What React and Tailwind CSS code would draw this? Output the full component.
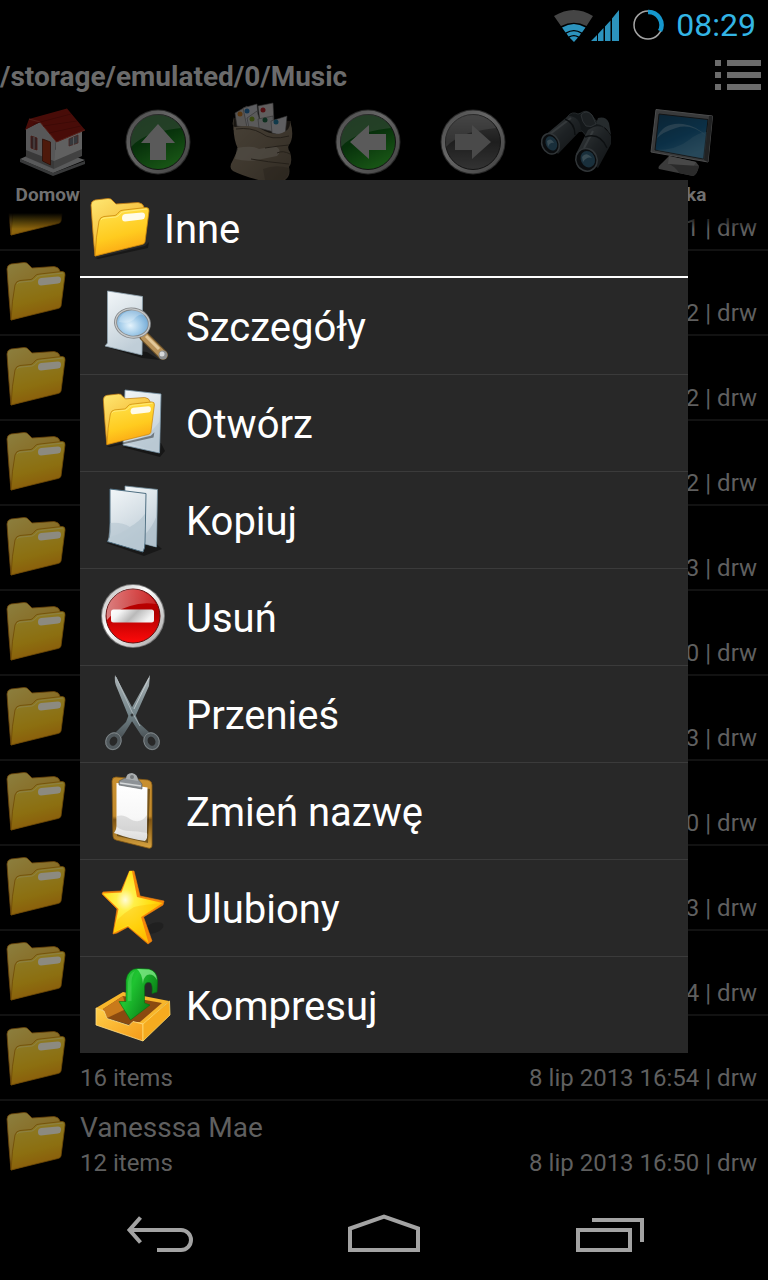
import React from 'react';

const FolderShape = () => (
  <g>
    <path d="M7 62 L57 50 L61 46 L60 52 L10 63Z" fill="#000" opacity="0.4" />
    <path
      d="M3 9 Q3 5 7 4 L20 2.500 Q23 2 25 5 L28 8 L50 6.500 Q55 7 56 11 L56 46 L7 60 Q5 40 3 9Z"
      fill="url(#folderBack)"
      stroke="#c07a10"
      strokeWidth="0.8"
    />
    <path
      d="M7 60 Q8 40 11 25 Q12 21 16 20.500 L27 19.500 Q29 19 31 16 Q32.500 14 36 14 L58 11.500 Q61.500 11.500 61 15 L57 46 Q56.500 48 54 48.500Z"
      fill="url(#folderFront)"
      stroke="#c9860d"
      strokeWidth="0.8"
    />
    <path d="M13 24 Q14 22 17 22 L28 21 Q31 20 33 17 Q34 16 37 15.500 L59 13" fill="none" stroke="#fff09a" strokeWidth="1" opacity="0.7" />
    <path d="M37 18 L54 16.500 Q57 16.500 57 19.500 Q57 23 54 23.500 L37 25.500 Q34 25.500 34 22 Q34 18.500 37 18Z" fill="#fffbe9" />
  </g>
);

const Folder = ({ className }) => (
  <svg viewBox="0 0 64 64" className={className}>
    <FolderShape />
  </svg>
);

// Gradients shared by all the icons
const Gradients = () => (
  <svg className="absolute w-0 h-0" aria-hidden="true">
    <defs>
      <linearGradient id="folderBack" x1="0" y1="0" x2="0.6" y2="1">
        <stop offset="0" stopColor="#ffe873" />
        <stop offset="1" stopColor="#f0a81c" />
      </linearGradient>
      <linearGradient id="folderFront" x1="0.2" y1="0" x2="0.5" y2="1">
        <stop offset="0" stopColor="#ffe24d" />
        <stop offset="0.6" stopColor="#ffcb1f" />
        <stop offset="1" stopColor="#fba312" />
      </linearGradient>
      <linearGradient id="paper" x1="0" y1="0" x2="0.4" y2="1">
        <stop offset="0" stopColor="#f3f7f9" />
        <stop offset="0.55" stopColor="#d8e1e7" />
        <stop offset="1" stopColor="#c0ced8" />
      </linearGradient>
      <linearGradient id="whitePaper" x1="0" y1="0" x2="0" y2="1">
        <stop offset="0" stopColor="#ffffff" />
        <stop offset="0.6" stopColor="#f7f7f7" />
        <stop offset="1" stopColor="#dcdcdc" />
      </linearGradient>
      <linearGradient id="ring" x1="0" y1="0" x2="1" y2="1">
        <stop offset="0" stopColor="#b5b5b5" />
        <stop offset="0.4" stopColor="#ffffff" />
        <stop offset="1" stopColor="#a0a0a0" />
      </linearGradient>
      <linearGradient id="red" x1="0" y1="0" x2="0" y2="1">
        <stop offset="0" stopColor="#c80000" />
        <stop offset="0.45" stopColor="#b00000" />
        <stop offset="1" stopColor="#ff0a0a" />
      </linearGradient>
      <linearGradient id="green" x1="0" y1="0" x2="0.5" y2="1">
        <stop offset="0" stopColor="#0c6a1c" />
        <stop offset="0.5" stopColor="#12791c" />
        <stop offset="1" stopColor="#3bd035" />
      </linearGradient>
      <linearGradient id="grey" x1="0" y1="0" x2="0" y2="1">
        <stop offset="0" stopColor="#8a8a8a" />
        <stop offset="0.5" stopColor="#4c4c4c" />
        <stop offset="1" stopColor="#808080" />
      </linearGradient>
      <linearGradient id="gloss" x1="0" y1="0" x2="1" y2="0">
        <stop offset="0" stopColor="#fff" stopOpacity="0.5" />
        <stop offset="1" stopColor="#fff" stopOpacity="0.15" />
      </linearGradient>
      <linearGradient id="bar" x1="0" y1="0" x2="1" y2="0.3">
        <stop offset="0" stopColor="#ffffff" />
        <stop offset="0.25" stopColor="#f4f4f4" />
        <stop offset="0.6" stopColor="#b9b9b9" />
        <stop offset="1" stopColor="#f4f4f4" />
      </linearGradient>
      <radialGradient id="lens" cx="0.45" cy="0.6" r="0.6">
        <stop offset="0" stopColor="#e4f3fc" />
        <stop offset="0.5" stopColor="#a5cdea" />
        <stop offset="1" stopColor="#6ba4d2" />
      </radialGradient>
      <linearGradient id="steel" x1="0" y1="0" x2="0" y2="1">
        <stop offset="0" stopColor="#aab2b5" />
        <stop offset="0.6" stopColor="#75868b" />
        <stop offset="1" stopColor="#4b5357" />
      </linearGradient>
      <linearGradient id="wood" x1="0" y1="0" x2="0" y2="1">
        <stop offset="0" stopColor="#c99030" />
        <stop offset="0.55" stopColor="#c28a2c" />
        <stop offset="0.6" stopColor="#7d5312" />
        <stop offset="1" stopColor="#d9a440" />
      </linearGradient>
      <radialGradient id="star" cx="0.38" cy="0.4" r="0.6">
        <stop offset="0" stopColor="#fffbd8" />
        <stop offset="0.25" stopColor="#fff04a" />
        <stop offset="0.7" stopColor="#ffdf12" />
        <stop offset="1" stopColor="#ffc505" />
      </radialGradient>
      <linearGradient id="tray" x1="0" y1="0" x2="1" y2="1">
        <stop offset="0" stopColor="#ffd04a" />
        <stop offset="1" stopColor="#f59a18" />
      </linearGradient>
      <linearGradient id="arrow" x1="0" y1="0" x2="1" y2="0.6">
        <stop offset="0" stopColor="#14a526" />
        <stop offset="0.4" stopColor="#1fc431" />
        <stop offset="1" stopColor="#087a14" />
      </linearGradient>
      <linearGradient id="screen" x1="0" y1="0" x2="0.5" y2="1">
        <stop offset="0" stopColor="#1c5a82" />
        <stop offset="0.6" stopColor="#1d78b0" />
        <stop offset="1" stopColor="#4fa8d8" />
      </linearGradient>
      <linearGradient id="barrel" x1="0" y1="0" x2="1" y2="1">
        <stop offset="0" stopColor="#8b959a" />
        <stop offset="0.5" stopColor="#4b555b" />
        <stop offset="1" stopColor="#2a3034" />
      </linearGradient>
      <linearGradient id="sack" x1="0" y1="0" x2="1" y2="1">
        <stop offset="0" stopColor="#b5a48a" />
        <stop offset="0.5" stopColor="#9b8a72" />
        <stop offset="1" stopColor="#7a6c58" />
      </linearGradient>
    </defs>
  </svg>
);

const Icon = ({ children }) => (
  <svg viewBox="0 0 80 80" className="w-20 h-20 shrink-0">
    {children}
  </svg>
);

const Details = () => (
  <Icon>
    <path d="M14 61 L50 72 L68 74 L55 66Z" fill="#000" opacity="0.45" />
    <path d="M15.500 5 L50.500 10.500 L50 69 L13 60 L15.500 57Z" fill="url(#paper)" stroke="#8fa3b0" strokeWidth="0.8" />
    <path d="M52 50 L71 69" stroke="#6e5228" strokeWidth="10" strokeLinecap="round" />
    <path d="M53 51 L71 69" stroke="#b8925a" strokeWidth="8" strokeLinecap="round" />
    <path d="M54 50 L67 63" stroke="#e3c899" strokeWidth="3" />
    <circle cx="71" cy="69" r="4.500" fill="#8d8f90" />
    <circle cx="70" cy="68" r="2.500" fill="#d6d8d9" />
    <ellipse cx="40.500" cy="37" rx="17" ry="14" fill="url(#lens)" stroke="#85888a" strokeWidth="3" transform="rotate(10 40 37)" />
    <ellipse cx="40.500" cy="37" rx="17" ry="14" fill="none" stroke="#c8cbcc" strokeWidth="1.200" transform="rotate(10 40 37)" />
    <path d="M27 36 Q38 39 44 31 Q50 26 53 31 Q51 24 40 24 Q28 26 27 36Z" fill="#fff" opacity="0.25" />
  </Icon>
);

const Open = () => (
  <Icon>
    <path d="M30 64 L68 74 L73 68 L69 60Z" fill="#000" opacity="0.45" />
    <path d="M33 7 L69 11 L67.500 70 L31 62Z" fill="url(#paper)" stroke="#7895a8" strokeWidth="0.8" />
    <path d="M68 38 Q56 55 36 60 L67 69Z" fill="#b4c4d0" opacity="0.6" />
    <g transform="translate(8.700 8.800) scale(0.880)">
      <FolderShape />
    </g>
  </Icon>
);

const Copy = () => (
  <Icon>
    <path d="M14 63 L52 76 L70 69 L60 60Z" fill="#000" opacity="0.4" />
    <path d="M33 6 L65.500 9.500 L64.500 67 L53 64 L33 60Z" fill="url(#paper)" stroke="#6f8a99" strokeWidth="0.8" />
    <path d="M65 35 Q60 48 53 54 L53 64 L64 67Z" fill="#acbdc9" opacity="0.7" />
    <path d="M18 9 L54 13.500 L53 62 Q53 68 51 72 L15.500 61.500 Q18 58 18 52Z" fill="url(#paper)" stroke="#4f6f82" strokeWidth="1" />
    <path d="M18 43 Q30 42 38 47 Q47 42 53 34 L51 71 L16 61Z" fill="#aebfcb" opacity="0.5" />
    <path d="M38 47 Q30 54 18 57 L16 61 L51 71 L53 34 Q47 42 38 47Z" fill="#b7c7d2" opacity="0.4" />
  </Icon>
);

const Remove = () => (
  <Icon>
    <circle cx="41" cy="39" r="32" fill="#777" />
    <circle cx="41" cy="39" r="31" fill="url(#ring)" />
    <circle cx="41" cy="39" r="27" fill="url(#red)" stroke="#5e1010" strokeWidth="1" />
    <path d="M15 43 A26 26 0 0 1 64 27 Q50 25 38 29 Q22 34 15 43Z" fill="url(#gloss)" />
    <rect x="19" y="32.500" width="43" height="13" rx="2.500" fill="url(#bar)" />
  </Icon>
);

const Cut = () => (
  <Icon>
    <ellipse cx="21.500" cy="67" rx="6" ry="7" fill="none" stroke="#50585c" strokeWidth="4.500" transform="rotate(25 21 67)" />
    <ellipse cx="59.500" cy="67" rx="6" ry="7" fill="none" stroke="#50585c" strokeWidth="4.500" transform="rotate(-25 60 67)" />
    <path d="M58 1 L57 12 L44 41 L32 60 L29 64 L22 60 L34 48 L39 35Z" fill="url(#steel)" />
    <path d="M23 1 Q22 8 25 14 L36 41 L49 61 L52 64 L59 60 L47 49 L41 35Z" fill="url(#steel)" />
    <path d="M24 3 L40 38 L48 52" stroke="#b5bec1" strokeWidth="0.8" fill="none" />
    <path d="M57 4 L42 35" stroke="#cdd3d5" strokeWidth="0.8" fill="none" />
    <ellipse cx="21.500" cy="67" rx="7.500" ry="8.500" fill="none" stroke="#83898b" strokeWidth="0.8" transform="rotate(25 21 67)" />
    <ellipse cx="59.500" cy="67" rx="7.500" ry="8.500" fill="none" stroke="#83898b" strokeWidth="0.8" transform="rotate(-25 60 67)" />
    <circle cx="40" cy="41" r="1.500" fill="#313739" />
  </Icon>
);

const Rename = () => (
  <Icon>
    <path d="M20 10 Q20 6 24 6 L56 9 Q60 10 60 14 L60 74 Q60 78 56 77 L24 69 Q21 68 21 65Z" fill="url(#wood)" stroke="#875b14" strokeWidth="0.8" />
    <path d="M27 14 L58 18 L56 72 L25 65Z" fill="#000" opacity="0.4" />
    <path d="M24.500 12 L55.500 16.500 L55 62 Q56 67 53 70 Q38 68 22 62 Q25 58 24.500 52Z" fill="url(#whitePaper)" />
    <path d="M25 45 Q32 43 38 48 Q48 54 55 44 L55 62 Q45 60 38 60 Q30 60 25 56Z" fill="#bcbcbc" opacity="0.45" />
    <path d="M27 10 L33 7 L46 8 L50 13 L50 18 L27 14Z" fill="#8d9296" stroke="#555a5d" strokeWidth="0.6" />
    <path d="M34 8 Q34 2 40 2 Q46 3 46 10Z" fill="#a9adaf" />
    <circle cx="40" cy="6" r="2" fill="#75797b" />
    <path d="M28 12 L49 15" stroke="#d5d8d9" strokeWidth="1.500" />
  </Icon>
);

const Favourite = () => (
  <Icon>
    <ellipse cx="62" cy="60" rx="10" ry="5" fill="#000" opacity="0.2" transform="rotate(-20 62 60)" />
    <path
      d="M37.500 3 L42 3 L48 28 L72 33 L71 37 L51.500 49 L60 73 L56 76 L36 59 L25 65 L21 66 L25 41 L10 26 L11 24 L29 23Z"
      fill="#f5860a"
      stroke="#f5860a"
      strokeWidth="0.6"
      strokeLinejoin="round"
    />
    <path d="M37.500 3 L40 3 L45 29 L70.500 35 L49 49 L56.500 75 L36 58 L21.500 65 L26.500 41 L10.500 25.500 L29.500 24.500Z" fill="url(#star)" strokeLinejoin="round" />
    <path d="M25 52 Q33 44 42 39 Q53 36 69 35.500 L49 49 L56 74 L36 57 L22 64Z" fill="#ffb400" opacity="0.35" />
  </Icon>
);

const Compress = () => (
  <Icon>
    <path d="M4 43 L31 27 L77 36 L51 60Z" fill="#f8b62b" />
    <path d="M11 44 L31 31 L70 38 L48 57 L40 57 L38 60 L15 53Z" fill="#8a4a10" />
    <path d="M11 44 L31 31 L34 44 L15 53Z" fill="#c97a1b" />
    <path d="M4 43 L12 46 L15 53.500 L37 60.500 L41 56.500 L51 59 L51 76 L4 60Z" fill="url(#tray)" stroke="#ffe08a" strokeWidth="0.8" />
    <path d="M51 59 L77.500 36 L78 50 L51 76Z" fill="#f6ab1f" stroke="#ffd968" strokeWidth="0.8" />
    <path d="M52 19 Q53 14 58 14 Q62 15 61 27 L65 27 L65.500 14 Q64 6 56 4Z" fill="#066a10" />
    <path
      d="M34 36.500 L34 15 Q36 3.500 46 3.500 L57 4 Q65 6 65.500 15 L65 27 L60 28.500 Q61 19 58 17.500 Q53 16.500 52.500 22 L52.500 38 L58 40 L38.500 55 L27 36.500Z"
      fill="url(#arrow)"
      stroke="#067012"
      strokeWidth="0.6"
    />
    <path d="M45 4 L57 4.500 Q65 7 65 15 Q61 8 55 10 Q51 13 51 19 Q50 8 45 4Z" fill="#8ff094" opacity="0.7" />
    <path d="M36 36 L36 17 Q37 8 43 6 Q39 12 39.500 20 L39.500 36Z" fill="#6be074" opacity="0.35" />
  </Icon>
);

const Round = ({ fill, angle, shaft }) => (
  <Icon>
    <circle cx="40" cy="40" r="32.500" fill="#666" />
    <circle cx="40" cy="40" r="31.500" fill="url(#ring)" />
    <circle cx="40" cy="40" r="27.500" fill={fill} stroke="#333" strokeWidth="1" />
    <path d="M13 45 A27 27 0 0 1 63 26 Q52 27 36 31 Q21 36 13 45Z" fill="#fff" opacity="0.3" />
    <path d="M40 22 L57 41 L48 41 L48 58 L32 58 L32 41 L23 41Z" fill={shaft} transform={`rotate(${angle} 40 40)`} />
  </Icon>
);

const House = () => (
  <Icon>
    <path d="M7 57 L40 71 L72 59 L72 62 L40 74 L7 60Z" fill="#8d8f91" />
    <path d="M7 57 L34 45 L72 58 L40 71Z" fill="#dfe1e3" />
    <path d="M13 27 L27 20 L43 38 L41 68 L13 56Z" fill="#d9d9dc" />
    <path d="M43 39 L69 28 L69 53 L41 67Z" fill="#f1f1f1" />
    <path d="M13 48 L41 59 L41 67 L13 55Z" fill="#8e8e90" />
    <path d="M41 59 L69 47 L69 54 L41 67Z" fill="#a3a3a3" />
    <path d="M12 28 L16 17 L54 6.500 L72 28 L43.500 40 L27 20Z" fill="#b52016" />
    <path d="M16 17 L27 20 L43.500 40 L72 28" stroke="#d84e3e" strokeWidth="1" fill="none" />
    <path d="M20 22 L58 12 M30 24 L64 19 M36 31 L68 24" stroke="#8c140d" strokeWidth="0.7" />
    <path d="M29.500 37 L37.500 40 L37.500 63 L29.500 59Z" fill="#c2401c" stroke="#702410" strokeWidth="0.8" />
    <path d="M18 34 L24 36 L24 48 L18 46Z" fill="#7d5355" stroke="#b03a2d" strokeWidth="0.8" />
    <path d="M21 35 V47" stroke="#f1f1f1" strokeWidth="0.8" />
    <path d="M56 37 L65 33 L65 41 L56 44Z" fill="#858c96" stroke="#af5c54" strokeWidth="0.8" />
    <path d="M60.500 35 V43" stroke="#eee" strokeWidth="0.8" />
  </Icon>
);

const Sack = () => (
  <Icon>
    <path d="M11 16 L10 28 L66 40 L68 19Z" fill="#3d352b" />
    <path d="M12 11 L24 4 L32 26 L14 24Z" fill="#dcd6d2" stroke="#777" strokeWidth="0.6" />
    <path d="M20 6 L34 2 L36 24 L24 25Z" fill="#e9e9ef" stroke="#777" strokeWidth="0.6" />
    <path d="M35 4 L50 1 L51 20 L37 20Z" fill="#f1eaea" stroke="#777" strokeWidth="0.6" />
    <path d="M24 16 L34 9 L39 26 L26 26Z" fill="#e2e2e2" stroke="#777" strokeWidth="0.6" />
    <path d="M35 17 L50 14 L51 30 L36 26Z" fill="#dddddf" stroke="#777" strokeWidth="0.6" />
    <path d="M48 19 L64 14 L62 34 L49 31Z" fill="#ecebf1" stroke="#777" strokeWidth="0.6" />
    <circle cx="17" cy="12" r="2.500" fill="#e08a28" />
    <circle cx="24" cy="9" r="2.500" fill="#2f86c9" />
    <circle cx="40" cy="8" r="2.500" fill="#d22c34" />
    <circle cx="29" cy="17" r="2.500" fill="#91b82c" />
    <circle cx="42" cy="18" r="2.500" fill="#24744f" />
    <circle cx="53" cy="20" r="2.500" fill="#2890b8" />
    <path
      d="M11 15 Q8 24 12 25 Q28 22 38 27 Q50 34 59 31 Q68 28 67 19 Q72 34 66 43 Q64 46 67 50 Q70 60 66 65 Q68 74 62 78 L40 79 Q22 75 10 69 Q5 66 10 58 L15 47 Q9 34 11 15Z"
      fill="url(#sack)"
    />
    <path d="M14 46 Q30 43 36 47 L52 44 Q60 48 54 54 L34 58 Q24 60 12 57Z" fill="#d2c8b8" opacity="0.6" />
    <path d="M40 67 Q52 62 66 66 Q66 76 60 78 L42 78Z" fill="#594d3e" opacity="0.4" />
    <path d="M13 27 Q28 25 38 31 Q48 39 66 34 M42 46 Q54 44 66 43 M54 51 Q60 48 67 52 M28 57 Q44 60 66 62" stroke="#5c5040" strokeWidth="1" fill="none" />
  </Icon>
);

const Binoculars = () => (
  <Icon>
    <path d="M30 14 Q34 9 40 12 L43 11 Q48 7 53 12 L58 19 L66 20 L66 33 L50 36 L44 29 L30 31Z" fill="#343e43" stroke="#667278" strokeWidth="0.8" />
    <path d="M5 35 L30 14 Q42 14 43 28 L20 52Z" fill="url(#barrel)" />
    <path d="M38 52 L50 28 Q64 18 73 34 L73 42 L60 66Z" fill="url(#barrel)" />
    <path d="M12 32 L33 16 M46 46 L55 29" stroke="#a1adb2" strokeWidth="2" opacity="0.6" />
    <path d="M27 17 Q37 21 37 33" stroke="#20272b" strokeWidth="1.500" fill="none" />
    <path d="M47 35 Q62 30 69 46" stroke="#20272b" strokeWidth="1.500" fill="none" />
    <path d="M43 13 Q48 7 54 13 L58 22 Q53 26 48 24 Q44 20 43 13Z" fill="#465056" stroke="#848f95" strokeWidth="0.7" />
    <path d="M60 16 Q68 14 71 21 L73 33 Q66 22 58 22Z" fill="#606b71" />
    <ellipse cx="12.500" cy="42" rx="8.500" ry="10.500" fill="#1a2024" stroke="#7a868c" strokeWidth="1.500" transform="rotate(-25 12 42)" />
    <ellipse cx="13.500" cy="42" rx="5.500" ry="7.500" fill="#3f7594" transform="rotate(-25 12 42)" />
    <ellipse cx="48.500" cy="58" rx="10.500" ry="11.500" fill="#1a2024" stroke="#7a868c" strokeWidth="1.500" transform="rotate(-25 48 58)" />
    <ellipse cx="50" cy="58" rx="7" ry="8.500" fill="#3f7594" transform="rotate(-25 48 58)" />
    <path d="M44 55 Q48 49 54 56 Q49 54 45 60Z M9 39 Q13 35 16 41 Q12 40 10 45Z" fill="#8fbdd3" />
  </Icon>
);

const Monitor = () => (
  <Icon>
    <path d="M26 54 L53 60 L56 64 Q54 73 50 74 L16 67 Q14 65 19 61Z" fill="#949494" />
    <path d="M26 54 L53 60 L50 65 L25 62Z" fill="#b5b5b5" />
    <path d="M25 62 Q32 64 36 71 L50 74 Q54 73 56 64Z" fill="#6c6c6c" />
    <path d="M13 7.500 L69.500 14 L65 60 L8 50Z" fill="#8f9294" stroke="#bdbfc1" strokeWidth="1" />
    <path d="M66 14 L69.500 14 L65 60 L61 58Z" fill="#535658" />
    <path d="M16 12 L65 17.500 L60.500 57 L12 48Z" fill="url(#screen)" stroke="#2e3234" strokeWidth="1" />
    <path d="M14 36 Q20 20 40 22 Q54 24 63 34 Q48 21 33 26 Q20 30 14 36Z" fill="#a5d6ef" opacity="0.5" />
    <path d="M12 48 Q34 48 46 38 Q56 30 64 30 L61 57Z" fill="#8fd1f3" opacity="0.3" />
  </Icon>
);

const tools = [
  { label: 'Domowy', icon: <House /> },
  { label: 'W górę', icon: <Round fill="url(#green)" angle={0} shaft="#e2e2e2" /> },
  { label: 'Multi', icon: <Sack /> },
  { label: 'Wstecz', icon: <Round fill="url(#green)" angle={-90} shaft="#e2e2e2" /> },
  { label: 'Dalej', icon: <Round fill="url(#grey)" angle={90} shaft="#b8b8b8" /> },
  { label: 'Szukaj', icon: <Binoculars /> },
  { label: 'Belka', icon: <Monitor /> },
];

const folders = [
  { name: 'Abba', items: 11, date: '8 lip 2013 16:51' },
  { name: 'Adele', items: 12, date: '8 lip 2013 16:52' },
  { name: 'Bajm', items: 9, date: '8 lip 2013 16:52' },
  { name: 'Coldplay', items: 14, date: '8 lip 2013 16:52' },
  { name: 'Enya', items: 10, date: '8 lip 2013 16:53' },
  { name: 'Era', items: 13, date: '8 lip 2013 16:50' },
  { name: 'Lady Pank', items: 15, date: '8 lip 2013 16:53' },
  { name: 'Maanam', items: 12, date: '8 lip 2013 16:50' },
  { name: 'Perfect', items: 18, date: '8 lip 2013 16:53' },
  { name: 'Queen', items: 17, date: '8 lip 2013 16:54' },
  { name: 'Sade', items: 16, date: '8 lip 2013 16:54' },
  { name: 'Vanesssa Mae', items: 12, date: '8 lip 2013 16:50' },
];

const actions = [
  { label: 'Szczegóły', icon: <Details /> },
  { label: 'Otwórz', icon: <Open /> },
  { label: 'Kopiuj', icon: <Copy /> },
  { label: 'Usuń', icon: <Remove /> },
  { label: 'Przenieś', icon: <Cut /> },
  { label: 'Zmień nazwę', icon: <Rename /> },
  { label: 'Ulubiony', icon: <Favourite /> },
  { label: 'Kompresuj', icon: <Compress /> },
];

const StatusBar = () => (
  <header className="h-[50px] shrink-0 flex items-center justify-end pr-3 text-[#33b5e5]">
    <svg viewBox="0 0 66 34" className="w-[66px] h-[34px]">
      <path d="M0 8 Q20 -4 39 8 L32.500 18 Q20 11.500 7 18Z" fill="#454545" />
      <path d="M8 19.500 Q20 12.500 31.500 19.500 L28 24.500 Q20 19.500 11.500 24.500Z M12.500 25.500 Q20 21 27 25.500 L25 28.500 Q20 25.500 14.500 28.500Z M15.500 29.500 Q20 27 24 29.500 L20 34Z" fill="#2c93bd" />
      <path d="M37 33 L43 27 V33Z M44 26 L49.500 20 V33 H44Z M51 18.500 L56.500 12.500 V33 H51Z M58 10.500 L65 2 V33 H58Z" fill="#2c93bd" />
    </svg>
    <svg viewBox="0 0 32 32" className="w-8 h-8 ml-3 mr-3">
      <circle cx="16" cy="16" r="14" fill="none" stroke="#a5a5a5" strokeWidth="1.500" />
      <path d="M16 3 A13 13 0 0 1 28 22" fill="none" stroke="#1597cd" strokeWidth="4.500" />
    </svg>
    <span className="text-[32px] leading-10">08:29</span>
  </header>
);

const FolderRow = ({ name, items, date }) => (
  <li className="h-[85px] shrink-0 flex border-b-2 border-[#121212]">
    <Folder className="w-16 h-16 ml-1 mt-[9px] shrink-0 opacity-55" />
    <div className="flex-1 pl-3 pr-[11px] pt-2 text-[#5f5f5f]">
      <p className="text-[28px] leading-[38px]">{name}</p>
      <div className="flex justify-between text-[24px] leading-8">
        <span>{items} items</span>
        <span>{date} | drw</span>
      </div>
    </div>
  </li>
);

const ActionDialog = () => (
  <div role="dialog" aria-labelledby="dialog-title" className="bg-[#282828] text-white">
    <div className="h-[98px] flex items-center gap-3 px-2 border-b-2 border-white">
      <Folder className="w-16 h-16" />
      <h2 id="dialog-title" className="pt-1 text-[40px] leading-[48px]">Inne</h2>
    </div>
    <ul>
      {actions.map(({ label, icon }) => (
        <li key={label} className="border-b border-[#3b3b3b] last:border-b-0">
          <button className="w-full h-24 px-3 flex items-center gap-[14px] text-left cursor-pointer">
            {icon}
            <span className="pt-1 text-[40px] leading-[48px]">{label}</span>
          </button>
        </li>
      ))}
    </ul>
  </div>
);

const NavBar = () => (
  <nav className="h-24 shrink-0 px-12 grid grid-cols-3 place-items-center bg-black">
    <button aria-label="Wstecz">
      <svg viewBox="0 0 80 48" className="w-20 h-12" fill="none" stroke="#a3a3a3" strokeWidth="4">
        <path d="M20.500 9.500 L9.500 22 L20.500 34.500 M9.500 22 H61 A10 10 0 0 1 61 42 H37" />
      </svg>
    </button>
    <button aria-label="Ekran główny">
      <svg viewBox="0 0 80 48" className="w-20 h-12" fill="none" stroke="#a3a3a3" strokeWidth="4">
        <path d="M6 42 V20.500 L40 8.500 L74 20.500 V42Z" />
      </svg>
    </button>
    <button aria-label="Ostatnie">
      <svg viewBox="0 0 80 48" className="w-20 h-12" fill="none" stroke="#a3a3a3" strokeWidth="4">
        <path d="M10 22 H62 V42 H10Z M24 12 H74 V34" />
      </svg>
    </button>
  </nav>
);

const App = () => {
  return (
    <div className="h-screen flex flex-col bg-black font-['Roboto',sans-serif] overflow-hidden">
      <Gradients />
      <StatusBar />

      <main className="relative flex-1 min-h-0 flex flex-col overflow-hidden">
        {/* Path */}
        <div className="h-[52px] shrink-0 flex items-center justify-between pr-[6px]">
          <h1 className="pt-0.5 text-[28px] leading-9 font-bold text-[#6b6b6b]">/storage/emulated/0/Music</h1>
          <button aria-label="Menu">
            <svg viewBox="0 0 48 32" className="w-12 h-8" fill="#6b6b6b">
              <path d="M1 0 h6 v6 h-6Z M13 0 h34 v6 h-34Z M1 12 h6 v6 h-6Z M13 12 h34 v6 h-34Z M1 24 h6 v6 h-6Z M13 24 h34 v6 h-34Z" />
            </svg>
          </button>
        </div>

        {/* Toolbar */}
        <div className="h-[111px] shrink-0 flex overflow-hidden">
          {tools.map(({ label, icon }) => (
            <button key={label} className="w-[105px] shrink-0 flex flex-col items-center">
              <span className="opacity-40">{icon}</span>
              <span className="text-[19px] leading-[26px] font-bold text-[#707070]">{label}</span>
            </button>
          ))}
        </div>

        {/* Folder list, scrolled by half a row */}
        <div className="relative flex-1 min-h-0 overflow-hidden">
          <ul className="flex flex-col -mt-[47px]">
            {folders.map((folder) => (
              <FolderRow key={folder.name} {...folder} />
            ))}
          </ul>
          <div className="absolute inset-x-0 top-0 h-4 bg-linear-to-b from-black to-transparent"></div>
        </div>

        {/* Dialog */}
        <div className="absolute inset-0 px-20 pt-[130px]">
          <ActionDialog />
        </div>
      </main>

      <NavBar />
    </div>
  );
};

export default App;
